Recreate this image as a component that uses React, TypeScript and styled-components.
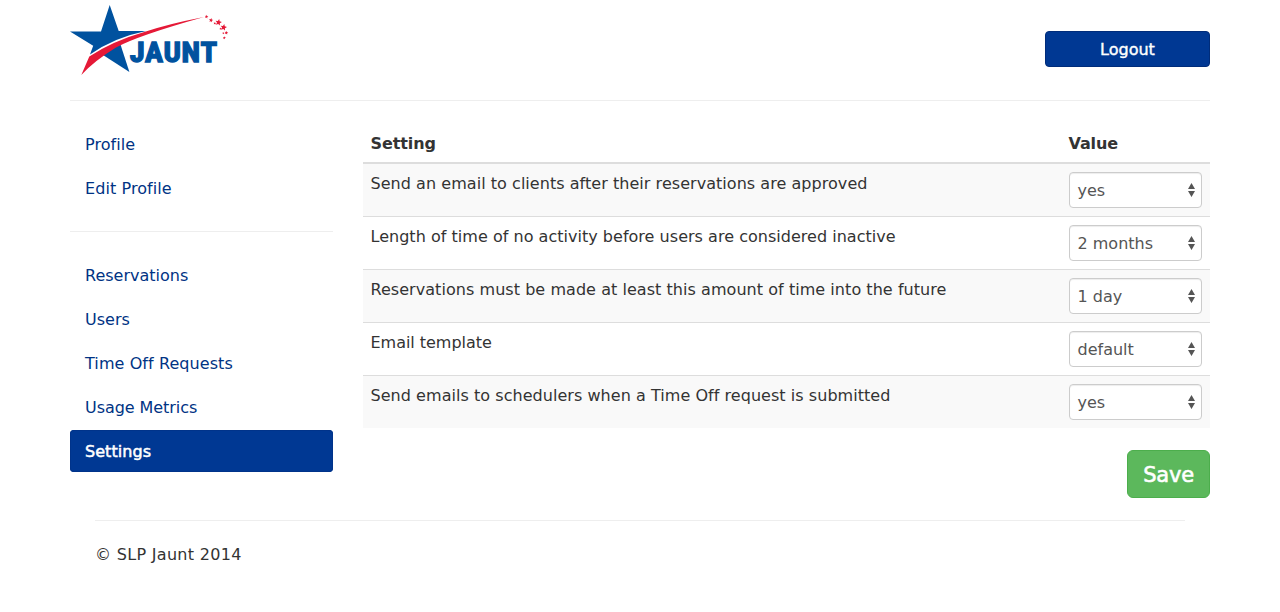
import React from "react";
import styled, { createGlobalStyle, css } from "styled-components";

const GlobalStyle = createGlobalStyle`
  *, *::before, *::after { box-sizing: border-box; }
  body {
    margin: 0;
    background: #fff;
    color: #333;
    font: 16px/23px Verdana, "DejaVu Sans", sans-serif;
    font-variant-ligatures: none;
  }
`;

const Container = styled.div`
  width: 1140px;
  margin: 0 auto;
`;

const Header = styled.header`
  display: flex;
  justify-content: space-between;
  align-items: flex-start;
  height: 101px;
  border-bottom: 1px solid #eee;
`;

const LogoMark = styled.svg`
  display: block;
  width: 160px;
  height: 80px;
`;

const LogoutButton = styled.button`
  width: 165px;
  height: 36px;
  margin-top: 31px;
  padding: 0;
  border: 1px solid #002c7a;
  border-radius: 4px;
  background: #003893;
  color: #fff;
  font: inherit;
  -webkit-text-stroke: 0.4px #fff;
`;

const Columns = styled.div`
  display: flex;
  gap: 30px;
  padding-top: 22px;
`;

const Sidebar = styled.nav`
  width: 263px;
`;

const NavList = styled.ul`
  display: flex;
  flex-direction: column;
  gap: 2px;
  margin: 0;
  padding: 0;
  list-style: none;
`;

const NavLink = styled.a<{ $active?: boolean; $tracking?: number }>`
  display: flex;
  align-items: center;
  height: 42px;
  padding: 0 15px;
  border-radius: 4px;
  color: #003384;
  text-decoration: none;
  letter-spacing: ${(p) => p.$tracking ?? 0}px;
  ${(p) =>
    p.$active &&
    css`
      background: #003893;
      box-shadow: inset 0 0 0 1px #00338a;
      color: #fff;
      -webkit-text-stroke: 0.5px #fff;
    `}
`;

const Divider = styled.hr`
  height: 1px;
  margin: 22px 0;
  border: 0;
  background: #eee;
`;

const Main = styled.main`
  display: flex;
  flex-direction: column;
  width: 847px;
`;

const Table = styled.table`
  width: 100%;
  border-collapse: separate;
  border-spacing: 0;
  table-layout: fixed;
`;

const HeadCell = styled.th<{ $width?: number }>`
  width: ${(p) => (p.$width ? `${p.$width}px` : "auto")};
  height: 41px;
  padding: 9px 7.5px 7px;
  border-bottom: 2px solid #ddd;
  text-align: left;
  letter-spacing: -0.1px;
`;

const Row = styled.tr`
  &:nth-child(odd) {
    background: #f9f9f9;
  }
  &:not(:first-child) td {
    border-top: 1px solid #ddd;
  }
`;

const Cell = styled.td<{ $tracking?: number }>`
  padding: 8px 8px 8px 7.5px;
  vertical-align: top;
  white-space: nowrap;
  letter-spacing: ${(p) => p.$tracking ?? 0}px;
`;

const ValueCell = styled(Cell)`
  padding-left: 8px;
`;

const SelectBox = styled.div`
  display: flex;
  align-items: center;
  justify-content: space-between;
  height: 36px;
  padding: 1px 6px 0 7.5px;
  border: 1px solid #ccc;
  border-radius: 4px;
  background: #fff;
  box-shadow: inset 0 1px 1px rgba(0, 0, 0, 0.075);
  color: #555;
`;

const SelectArrows = styled.svg`
  width: 7px;
  height: 14px;
  margin-bottom: 2px;
  fill: #555;
`;

const SaveButton = styled.button`
  align-self: flex-end;
  width: 83px;
  height: 48px;
  margin-top: 22px;
  padding: 2px 0 0;
  border: 1px solid #4cae4c;
  border-radius: 6px;
  background: #5cb85c;
  color: #fff;
  font: 21px/28px Verdana, "DejaVu Sans", sans-serif;
  letter-spacing: -0.2px;
  -webkit-text-stroke: 0.6px #fff;
`;

const Footer = styled.footer`
  margin: 22px 25px 0;
  padding-top: 22px;
  border-top: 1px solid #eee;
  letter-spacing: 0.31px;
`;

const accountLinks = [
  { label: "Profile", tracking: 0.05 },
  { label: "Edit Profile", tracking: 0.08 },
];

const adminLinks = [
  { label: "Reservations", tracking: 0 },
  { label: "Users", tracking: 0 },
  { label: "Time Off Requests", tracking: 0.08 },
  { label: "Usage Metrics", tracking: -0.06 },
  { label: "Settings", tracking: 0.06, active: true },
];

const settings = [
  { label: "Send an email to clients after their reservations are approved", value: "yes", tracking: 0.045 },
  { label: "Length of time of no activity before users are considered inactive", value: "2 months", tracking: 0.025 },
  { label: "Reservations must be made at least this amount of time into the future", value: "1 day", tracking: 0.05 },
  { label: "Email template", value: "default", tracking: -0.03 },
  { label: "Send emails to schedulers when a Time Off request is submitted", value: "yes", tracking: 0.045 },
];

const sparks = [
  [136.5, 16.7, 1.9],
  [141, 20.2, 2.2],
  [144.8, 23.4, 1.4],
  [148.5, 22.4, 3.4],
  [153.6, 27.4, 3.4],
  [150.6, 28.7, 1.3],
  [156.4, 32.8, 1.9],
  [153.4, 33.2, 1.2],
  [154.3, 37.8, 1.6],
];

const starPoints = (cx: number, cy: number, r: number) =>
  Array.from({ length: 10 }, (_, i) => {
    const radius = i % 2 ? r * 0.45 : r;
    const angle = (i * Math.PI) / 5 - Math.PI / 2 + 0.2;
    return `${(cx + radius * Math.cos(angle)).toFixed(2)},${(cy + radius * Math.sin(angle)).toFixed(2)}`;
  }).join(" ");

function Logo() {
  return (
    <LogoMark viewBox="0 0 160 80" role="img" aria-label="Jaunt">
      <path
        fill="#00529f"
        d="M39.7 5 L48.7 31 H76 Q44 37.5 20 54.5 L23.2 45.8 L0 31.4 H31 Z"
      />
      <path fill="#00529f" d="M33 55 L50 43 L59.4 72 Z" />
      <path
        fill="#e51937"
        d="M134 17 Q98 24 75 31.8 Q43 41 19.3 56.5 L11.3 75 Q24 61 46 47.5 Q68 35.5 134 17 Z"
      />
      <text
        x="60"
        y="62"
        textLength="88"
        lengthAdjust="spacingAndGlyphs"
        fill="#00529f"
        stroke="#00529f"
        strokeWidth="1.3"
        fontFamily="Roboto, sans-serif"
        fontWeight="900"
        fontSize="27.5"
        letterSpacing="1.2"
      >
        JAUNT
      </text>
      {sparks.map(([x, y, r]) => (
        <polygon key={`${x}-${y}`} points={starPoints(x, y, r)} fill="#e51937" />
      ))}
    </LogoMark>
  );
}

function Select({ value }: { value: string }) {
  return (
    <SelectBox>
      {value}
      <SelectArrows viewBox="0 0 7 14">
        <path d="M3.5 0 L7 6 H0 Z M0 8 H7 L3.5 14 Z" />
      </SelectArrows>
    </SelectBox>
  );
}

export default function App() {
  return (
    <>
      <GlobalStyle />
      <Container>
        <Header>
          <Logo />
          <LogoutButton>Logout</LogoutButton>
        </Header>
        <Columns>
          <Sidebar>
            <NavList>
              {accountLinks.map((l) => (
                <li key={l.label}>
                  <NavLink $tracking={l.tracking}>{l.label}</NavLink>
                </li>
              ))}
            </NavList>
            <Divider />
            <NavList>
              {adminLinks.map((l) => (
                <li key={l.label}>
                  <NavLink $active={l.active} $tracking={l.tracking}>
                    {l.label}
                  </NavLink>
                </li>
              ))}
            </NavList>
          </Sidebar>
          <Main>
            <Table>
              <thead>
                <tr>
                  <HeadCell>Setting</HeadCell>
                  <HeadCell $width={149}>Value</HeadCell>
                </tr>
              </thead>
              <tbody>
                {settings.map((s) => (
                  <Row key={s.label}>
                    <Cell $tracking={s.tracking}>{s.label}</Cell>
                    <ValueCell>
                      <Select value={s.value} />
                    </ValueCell>
                  </Row>
                ))}
              </tbody>
            </Table>
            <SaveButton>Save</SaveButton>
          </Main>
        </Columns>
        <Footer>© SLP Jaunt 2014</Footer>
      </Container>
    </>
  );
}
